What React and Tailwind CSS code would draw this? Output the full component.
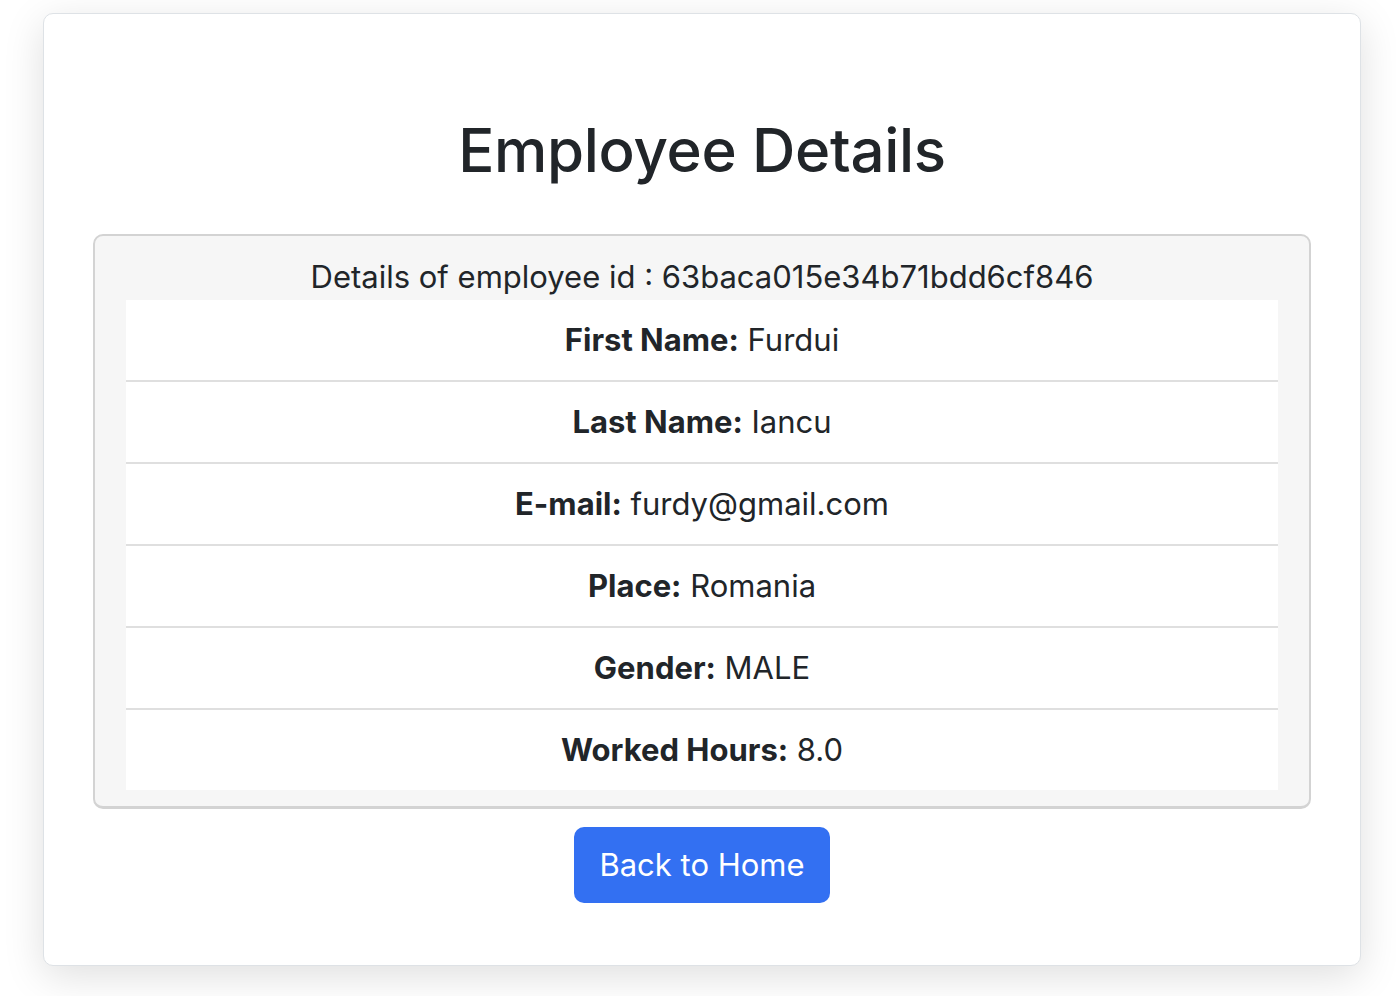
export default function App() {
  const rows = [
    ['First Name:', 'Furdui'],
    ['Last Name:', 'Iancu'],
    ['E-mail:', 'furdy@gmail.com'],
    ['Place:', 'Romania'],
    ['Gender:', 'MALE'],
    ['Worked Hours:', '8.0'],
  ];

  return (
    <div className="min-h-screen bg-white pt-[13px] pl-[43px] text-[#212529]" style={{ fontFamily: 'Inter, "Noto Sans", sans-serif' }}>
      <div className="w-[1318px] h-[953px] border border-[#dee2e6] rounded-[10px] bg-white shadow-[0_10px_40px_rgba(0,0,0,0.13)] flex flex-col items-center">
        <h1 className="mt-[98px] text-[60px] leading-[76px] font-medium tracking-[-0.005em]">Employee Details</h1>

        <div className="mt-[46px] w-[1218px] bg-[#f6f6f6] border-2 border-b-[3px] border-[#d3d3d3] rounded-[10px] pb-[16px]">
          <div className="h-[64px] pt-[18px] text-center text-[31px] leading-[45px]">
            Details of employee id : 63baca015e34b71bdd6cf846
          </div>
          <div className="mx-[31px] bg-white">
            {rows.map(([label, value], i) => (
              <div
                key={label}
                className={`h-[80px] flex items-center justify-center text-[31px] ${i < rows.length - 1 ? 'border-b-2 border-[#dfdfdf] h-[82px]' : ''}`}
              >
                <span className="font-bold">{label}</span>
                <span>&nbsp;{value}</span>
              </div>
            ))}
          </div>
        </div>

        <button className="mt-[18px] w-[256px] h-[76px] bg-[#3370f2] text-white text-[31px] rounded-[10px]">
          Back to Home
        </button>
      </div>
    </div>
  );
}
